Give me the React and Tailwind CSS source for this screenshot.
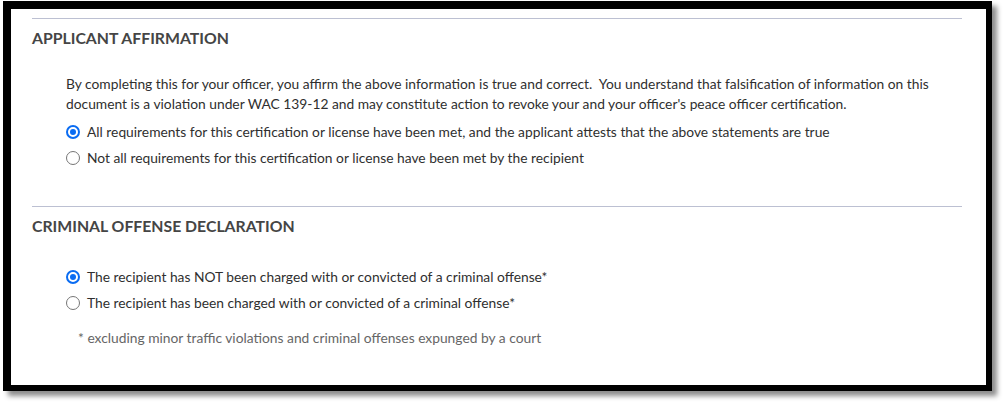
import React from 'react';

function Radio({ checked, children }) {
  return (
    <label className="flex items-center h-[26px] gap-[7px]">
      {checked ? (
        <span className="w-[14px] h-[14px] rounded-full border-2 border-[#0a6cf2] flex items-center justify-center shrink-0">
          <span className="w-[6px] h-[6px] rounded-full bg-[#0a6cf2]" />
        </span>
      ) : (
        <span className="w-[14px] h-[14px] rounded-full border border-[#767676] bg-white shrink-0" />
      )}
      <span>{children}</span>
    </label>
  );
}

export default function App() {
  return (
    <div className="w-[1005px] h-[404px] bg-white" style={{ fontFamily: 'Lato, "Noto Sans", sans-serif' }}>
      <div className="ml-[3px] pt-[1px]">
        <div className="w-[989px] h-[390px] border-black border-l-8 border-t-8 border-r-[6px] border-b-[6px] bg-white shadow-[5px_5px_5px_rgba(0,0,0,0.45)] pl-[21px] pr-[24px] pt-[9px] text-[13.8px] text-[#2f2f2f]">
          {/* applicant affirmation */}
          <div className="border-t border-[#bcc0d2]" />
          <h2 className="mt-[9px] h-[20px] leading-[20px] text-[15.8px] font-bold text-[#454545] uppercase">
            Applicant Affirmation
          </h2>
          <div className="pl-[34px] pt-[26px]">
            <p className="leading-[19.5px]">
              By completing this for your officer, you affirm the above information is true and correct.&nbsp; You understand that falsification of information on this document is a violation under WAC 139-12 and may constitute action to revoke your and your officer's peace officer certification.
            </p>
            <div className="mt-[6px]">
              <Radio checked>All requirements for this certification or license have been met, and the applicant attests that the above statements are true</Radio>
              <Radio>Not all requirements for this certification or license have been met by the recipient</Radio>
            </div>
          </div>

          {/* criminal offense */}
          <div className="mt-[35px] border-t border-[#bcc0d2]" />
          <h2 className="mt-[9px] h-[20px] leading-[20px] text-[15.8px] font-bold text-[#454545] uppercase">
            Criminal Offense Declaration
          </h2>
          <div className="pl-[34px] pt-[28px]">
            <Radio checked>The recipient has NOT been charged with or convicted of a criminal offense*</Radio>
            <Radio>The recipient has been charged with or convicted of a criminal offense*</Radio>
            <p className="mt-[12px] pl-[12px] leading-[20px] text-[#666666]">
              * excluding minor traffic violations and criminal offenses expunged by a court
            </p>
          </div>
        </div>
      </div>
    </div>
  );
}
